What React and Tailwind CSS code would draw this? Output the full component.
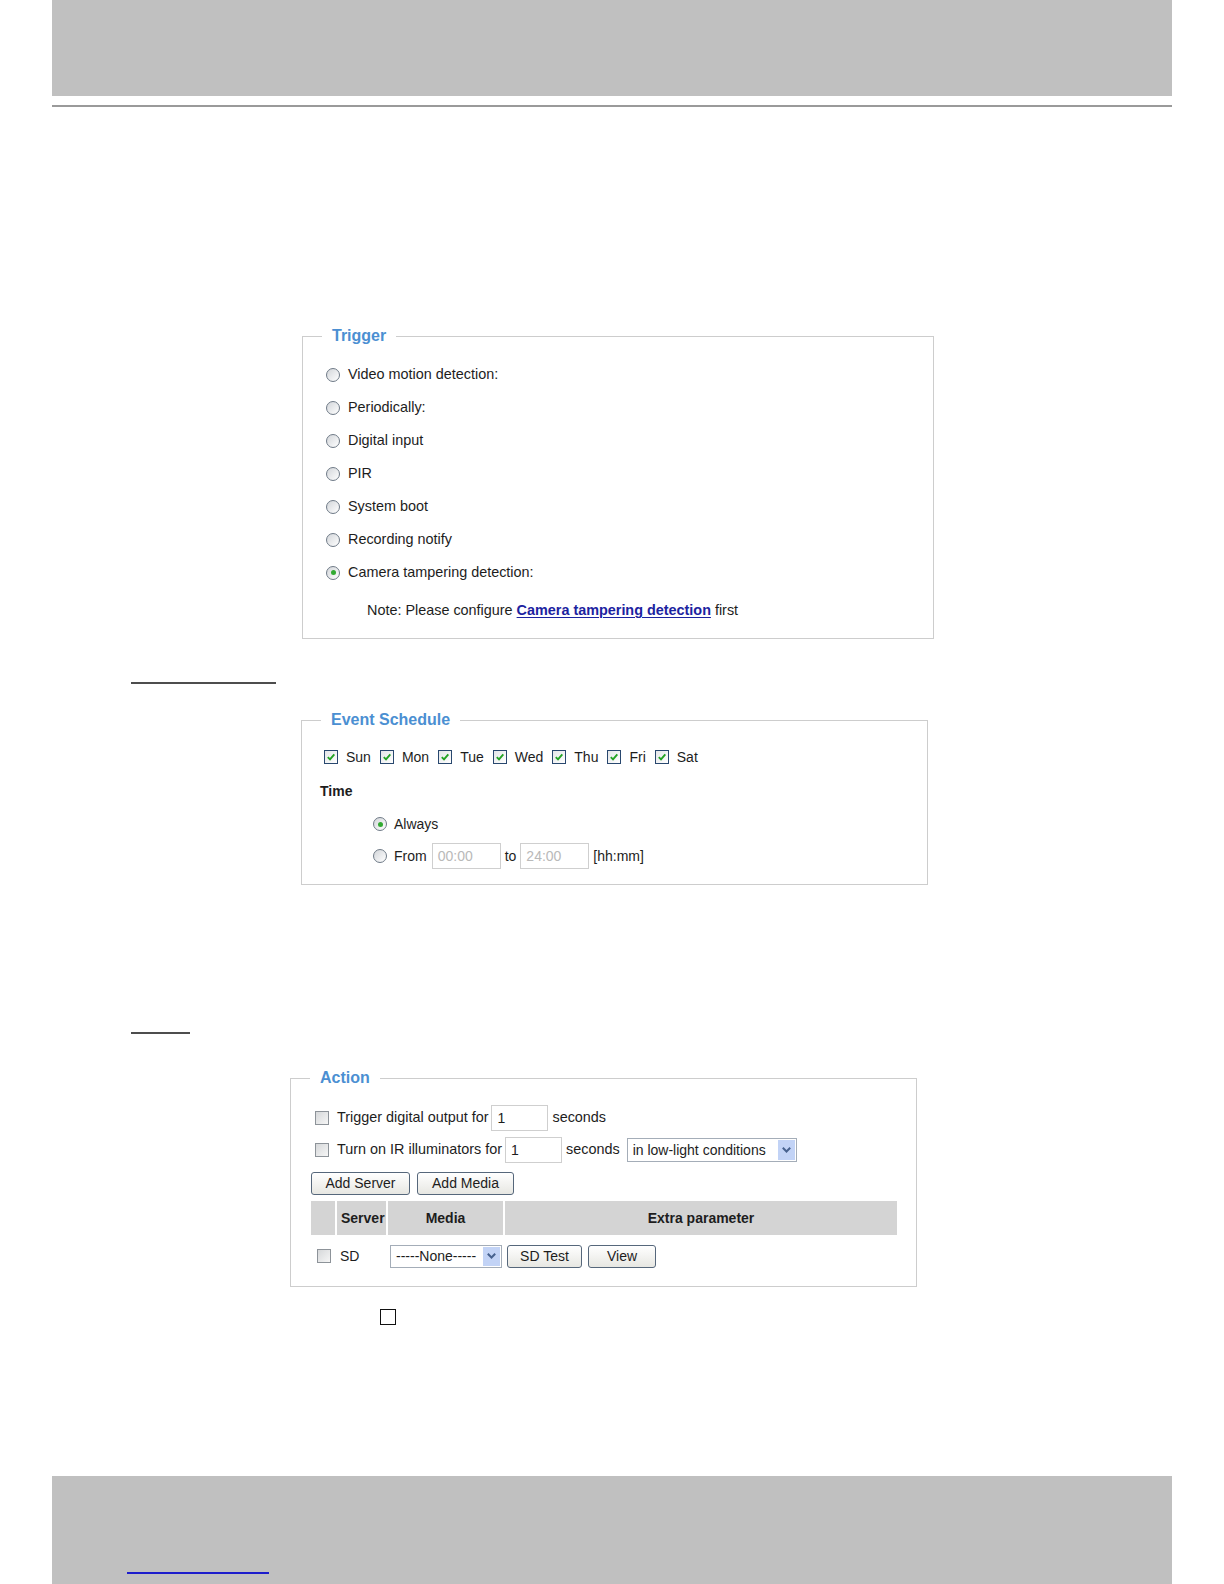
import React from 'react';

const font = { fontFamily: '"Liberation Sans", Arial, sans-serif' };

function Radio({ checked }) {
  return (
    <span className="w-[14px] h-[14px] shrink-0 rounded-full border border-[#6f7a87] bg-gradient-to-br from-[#d3d6da] to-white flex items-center justify-center">
      {checked && <span className="w-[5px] h-[5px] rounded-full bg-[#32aa32]" />}
    </span>
  );
}

function Check({ checked }) {
  if (checked) {
    return (
      <span className="w-[14px] h-[14px] shrink-0 border border-[#29486f] bg-gradient-to-br from-[#e4e6e8] to-white flex items-center justify-center">
        <svg width="10" height="10" viewBox="0 0 10 10">
          <path d="M1.8 5.2 L4 7.4 L8.3 2.4" fill="none" stroke="#23a323" strokeWidth="1.9" />
        </svg>
      </span>
    );
  }
  return (
    <span className="w-[14px] h-[14px] shrink-0 border border-[#8d9399] bg-gradient-to-br from-[#d6d8da] to-[#f6f6f6]" />
  );
}

function Legend({ children }) {
  return (
    <legend className="ml-[19px] px-[10px] text-[16px] leading-[18px] font-bold text-[#4b8fd2]">
      {children}
    </legend>
  );
}

function Btn({ children, w }) {
  return (
    <span
      className={`${w} h-[23px] flex items-center justify-center rounded-[3px] border border-[#56677b] bg-gradient-to-b from-white to-[#e7e7e2] text-[14px] text-[#1d1d1d]`}
    >
      {children}
    </span>
  );
}

function Select({ w, h, children }) {
  return (
    <span className={`${w} ${h} flex items-stretch border border-[#a4adb8] bg-white`}>
      <span className="flex-1 flex items-center pl-[5px] text-[14px] text-[#1d1d1d] whitespace-nowrap overflow-hidden">
        {children}
      </span>
      <span className="w-[17px] m-[1px] bg-[#c2d3f6] flex items-center justify-center">
        <svg width="11" height="8" viewBox="0 0 11 8">
          <path d="M1.8 1.8 L5.5 5.5 L9.2 1.8" fill="none" stroke="#47628f" strokeWidth="2" />
        </svg>
      </span>
    </span>
  );
}

function TextBox({ w, value, muted }) {
  return (
    <span
      className={`${w} h-[26px] flex items-center pl-[5px] border border-[#cfcfcf] bg-white text-[14px] ${
        muted ? 'text-[#b9b9b9]' : 'text-[#1d1d1d]'
      }`}
    >
      {value}
    </span>
  );
}

const triggers = [
  'Video motion detection:',
  'Periodically:',
  'Digital input',
  'PIR',
  'System boot',
  'Recording notify',
  'Camera tampering detection:',
];

const days = ['Sun', 'Mon', 'Tue', 'Wed', 'Thu', 'Fri', 'Sat'];

export default function App() {
  return (
    <div className="w-[1224px] h-[1584px] bg-white flex flex-col text-[#1d1d1d]" style={font}>
      {/* Page header */}
      <div className="mx-[52px] h-[96px] bg-[#c0c0c0]" />
      <div className="mx-[52px] mt-[9px] h-[2px] bg-[#9a9a9a]" />

      {/* Trigger */}
      <fieldset className="mt-[220px] ml-[302px] w-[632px] border border-[#cdcdcd]">
        <Legend>Trigger</Legend>
        <div className="pt-[13px] pb-[14px]">
          {triggers.map((t, i) => (
            <div key={t} className="h-[33px] pl-[23px] flex items-center gap-[8px] text-[14.4px]">
              <Radio checked={i === triggers.length - 1} />
              <span>{t}</span>
            </div>
          ))}
          <div className="mt-[9px] h-[26px] pl-[64px] flex items-center text-[14.4px]">
            <span className="whitespace-pre">Note: Please configure </span>
            <span className="font-bold text-[#1c23a0] underline underline-offset-2">Camera tampering detection</span>
            <span className="whitespace-pre"> first</span>
          </div>
        </div>
      </fieldset>

      <div className="mt-[43px] ml-[131px] w-[145px] h-[2px] bg-[#4d4d4d]" />

      {/* Event Schedule */}
      <fieldset className="mt-[27px] ml-[301px] w-[627px] border border-[#cdcdcd]">
        <Legend>Event Schedule</Legend>
        <div className="pt-[17px] pb-[14px] text-[14px]">
          <div className="h-[22px] pl-[22px] flex items-center gap-[9px]">
            {days.map((d) => (
              <span key={d} className="flex items-center gap-[8px]">
                <Check checked />
                <span>{d}</span>
              </span>
            ))}
          </div>
          <div className="mt-[12px] h-[22px] pl-[18px] flex items-center font-bold">Time</div>
          <div className="mt-[9px] h-[26px] pl-[71px] flex items-center gap-[7px]">
            <Radio checked />
            <span>Always</span>
          </div>
          <div className="mt-[5px] h-[28px] pl-[71px] flex items-center">
            <Radio />
            <span className="ml-[7px]">From</span>
            <span className="ml-[5px]">
              <TextBox w="w-[69px]" value="00:00" muted />
            </span>
            <span className="ml-[4px]">to</span>
            <span className="ml-[4px]">
              <TextBox w="w-[69px]" value="24:00" muted />
            </span>
            <span className="ml-[4px]">[hh:mm]</span>
          </div>
        </div>
      </fieldset>

      <div className="mt-[147px] ml-[131px] w-[59px] h-[2px] bg-[#4d4d4d]" />

      {/* Action */}
      <fieldset className="mt-[35px] ml-[290px] w-[627px] border border-[#cdcdcd]">
        <Legend>Action</Legend>
        <div className="pt-[17px] pb-[15px] pl-[20px] text-[14.4px]">
          <div className="h-[28px] pl-[4px] flex items-center">
            <Check />
            <span className="ml-[8px]">Trigger digital output for</span>
            <span className="ml-[3px]">
              <TextBox w="w-[57px]" value="1" />
            </span>
            <span className="ml-[4px]">seconds</span>
          </div>
          <div className="mt-[4px] h-[28px] pl-[4px] flex items-center">
            <Check />
            <span className="ml-[8px]">Turn on IR illuminators for</span>
            <span className="ml-[3px]">
              <TextBox w="w-[57px]" value="1" />
            </span>
            <span className="ml-[4px]">seconds</span>
            <span className="ml-[7px]">
              <Select w="w-[170px]" h="h-[24px]">in low-light conditions</Select>
            </span>
          </div>
          <div className="mt-[7px] h-[24px] flex items-center gap-[7px]">
            <Btn w="w-[99px]">Add Server</Btn>
            <Btn w="w-[97px]">Add Media</Btn>
          </div>

          <div className="mt-[6px] w-[586px] grid grid-cols-[24px_49px_115px_392px] gap-x-[2px] text-[14px]">
            <div className="h-[34px] bg-[#d4d4d4]" />
            <div className="h-[34px] bg-[#d4d4d4] flex items-center pl-[4px] font-bold">Server</div>
            <div className="h-[34px] bg-[#d4d4d4] flex items-center justify-center font-bold">Media</div>
            <div className="h-[34px] bg-[#d4d4d4] flex items-center justify-center font-bold">
              Extra parameter
            </div>

            <div className="mt-[6px] h-[30px] flex items-center pl-[6px]">
              <Check />
            </div>
            <div className="mt-[6px] h-[30px] flex items-center pl-[3px]">SD</div>
            <div className="mt-[6px] h-[30px] flex items-center pl-[2px]">
              <Select w="w-[112px]" h="h-[23px]">-----None-----</Select>
            </div>
            <div className="mt-[6px] h-[30px] flex items-center gap-[6px] pl-[2px]">
              <Btn w="w-[75px]">SD Test</Btn>
              <Btn w="w-[68px]">View</Btn>
            </div>
          </div>
        </div>
      </fieldset>

      <div className="mt-[22px] ml-[380px] w-[16px] h-[16px] border-[1.5px] border-[#111]" />

      {/* Page footer */}
      <div className="mt-auto mx-[52px] h-[108px] bg-[#c0c0c0] pt-[96px] pl-[75px]">
        <div className="w-[142px] h-[2px] bg-[#1d1dcc]" />
      </div>
    </div>
  );
}
